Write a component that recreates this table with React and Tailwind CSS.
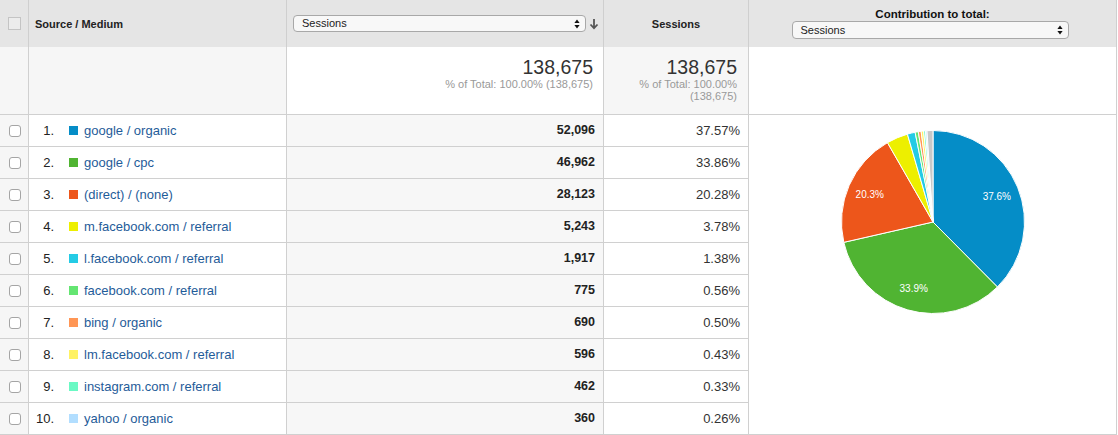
import React from 'react';

const rows = [
  { n: 1, label: 'google / organic', color: '#058dc7', sessions: '52,096', pct: '37.57%', v: 37.57 },
  { n: 2, label: 'google / cpc', color: '#50b432', sessions: '46,962', pct: '33.86%', v: 33.86 },
  { n: 3, label: '(direct) / (none)', color: '#ed561b', sessions: '28,123', pct: '20.28%', v: 20.28 },
  { n: 4, label: 'm.facebook.com / referral', color: '#edef00', sessions: '5,243', pct: '3.78%', v: 3.78 },
  { n: 5, label: 'l.facebook.com / referral', color: '#24cbe5', sessions: '1,917', pct: '1.38%', v: 1.38 },
  { n: 6, label: 'facebook.com / referral', color: '#64e572', sessions: '775', pct: '0.56%', v: 0.56 },
  { n: 7, label: 'bing / organic', color: '#ff9655', sessions: '690', pct: '0.50%', v: 0.5 },
  { n: 8, label: 'lm.facebook.com / referral', color: '#fff263', sessions: '596', pct: '0.43%', v: 0.43 },
  { n: 9, label: 'instagram.com / referral', color: '#6af9c4', sessions: '462', pct: '0.33%', v: 0.33 },
  { n: 10, label: 'yahoo / organic', color: '#b2deff', sessions: '360', pct: '0.26%', v: 0.26 },
];

function SelectArrows() {
  return (
    <svg width="6" height="10" viewBox="0 0 6 10" className="shrink-0">
      <path d="M3 0.5 L5.6 4 L0.4 4 Z" fill="#111" />
      <path d="M3 9.5 L5.6 6 L0.4 6 Z" fill="#111" />
    </svg>
  );
}

function Pie() {
  const cx = 93;
  const cy = 93;
  const r = 91.5;
  const slices = [...rows.map((x) => ({ v: x.v, color: x.color })), { v: 1.05, color: '#c8c8c8' }];
  let acc = 0;
  const pt = (a, rad) => [cx + rad * Math.sin(a), cy - rad * Math.cos(a)];
  const labels = [];
  const paths = slices.map((s, i) => {
    const a0 = (acc / 100) * Math.PI * 2;
    acc += s.v;
    const a1 = (acc / 100) * Math.PI * 2;
    const [x0, y0] = pt(a0, r);
    const [x1, y1] = pt(a1, r);
    const large = a1 - a0 > Math.PI ? 1 : 0;
    if (s.v > 10) {
      const [lx, ly] = pt((a0 + a1) / 2, 69);
      labels.push({ x: lx, y: ly, t: s.v.toFixed(1) + '%' });
    }
    return (
      <path
        key={i}
        d={`M${cx} ${cy} L${x0} ${y0} A${r} ${r} 0 ${large} 1 ${x1} ${y1} Z`}
        fill={s.color}
        stroke="#fff"
        strokeWidth="1"
        strokeLinejoin="round"
      />
    );
  });
  return (
    <svg width="186" height="186" viewBox="0 0 186 186">
      {paths}
      {labels.map((l) => (
        <text
          key={l.t}
          x={l.x}
          y={l.y + 4}
          textAnchor="middle"
          fill="#fff"
          fontSize="10"
          fontFamily="Liberation Sans, Arial, sans-serif"
        >
          {l.t}
        </text>
      ))}
    </svg>
  );
}

export default function App() {
  return (
    <div className="w-[1118px] h-[435px] bg-white font-['Liberation_Sans',Arial,sans-serif] text-[#333] overflow-hidden">
      <div className="grid grid-cols-[29px_258px_317px_145px_368px] grid-rows-[47px_68px_repeat(10,32px)]">
        {/* header */}
        <div className="bg-[#e5e5e5] border-r border-[#cfcfcf] pl-[8px] pt-[17px]">
          <div className="w-[13px] h-[13px] border border-[#c4c4c4] bg-[#ececec]" />
        </div>
        <div className="bg-[#e5e5e5] border-r border-[#cfcfcf] flex items-center pl-[6px] pt-[2px] text-[11px] font-bold text-[#222]">
          Source / Medium
        </div>
        <div className="bg-[#e5e5e5] border-r border-[#cfcfcf] flex items-start pt-[15px] pl-[6px]">
          <div className="w-[293px] h-[17px] rounded-[4px] border border-[#a8a8a8] bg-[#f8f8f8] flex items-center justify-between pl-[8px] pr-[5px] text-[11px] text-[#222]">
            <span>Sessions</span>
            <SelectArrows />
          </div>
          <svg width="10" height="12" viewBox="0 0 10 12" className="ml-[3px] mt-[3px]">
            <path d="M5 1 V10 M1.5 6.5 L5 10.2 L8.5 6.5" stroke="#555" strokeWidth="1.8" fill="none" />
          </svg>
        </div>
        <div className="bg-[#e5e5e5] border-r border-[#cfcfcf] flex items-center justify-center pt-[2px] text-[11px] font-bold text-[#222]">
          Sessions
        </div>
        <div className="bg-[#e5e5e5] border-r border-[#cfcfcf] flex flex-col items-center pt-[8px]">
          <div className="text-[11.5px] leading-[13px] font-bold text-[#111]">Contribution to total:</div>
          <div className="mt-[0px] ml-[-5px] w-[277px] h-[18px] rounded-[4px] border border-[#a8a8a8] bg-[#f7f7f7] flex items-center justify-between pl-[8px] pr-[5px] text-[11px] text-[#222]">
            <span>Sessions</span>
            <SelectArrows />
          </div>
        </div>

        {/* totals */}
        <div className="bg-[#f6f6f6] border-r border-b border-[#d0d0d0]" />
        <div className="bg-[#f6f6f6] border-r border-b border-[#d0d0d0]" />
        <div className="bg-white border-r border-b border-[#d0d0d0] flex flex-col items-end pt-[9px] pr-[10px]">
          <div className="text-[19.5px] leading-[22px] text-[#333]">138,675</div>
          <div className="text-[11px] leading-[13px] text-[#999]">% of Total: 100.00% (138,675)</div>
        </div>
        <div className="bg-[#f6f6f6] border-r border-b border-[#d0d0d0] flex flex-col items-end text-right pt-[9px] pr-[11px]">
          <div className="text-[19.5px] leading-[22px] text-[#333]">138,675</div>
          <div className="text-[11px] leading-[12px] text-[#999]">
            % of Total: 100.00%
            <br />
            (138,675)
          </div>
        </div>
        <div className="bg-white border-r border-b border-[#d0d0d0]" />

        {/* rows */}
        {rows.map((r) => (
          <React.Fragment key={r.n}>
            <div className="bg-[#f6f6f6] border-r border-b border-[#d0d0d0] flex items-center pl-[9px]">
              <div className="w-[12px] h-[12px] rounded-[3px] border border-[#a5a5a5] bg-white" />
            </div>
            <div className="bg-white border-r border-b border-[#d0d0d0] flex items-center text-[13px]">
              <span className="w-[25px] text-right text-[#222]">{r.n}.</span>
              <span className="ml-[15px] w-[9px] h-[9px] shrink-0" style={{ backgroundColor: r.color }} />
              <span className="ml-[6px] text-[#1f5c99]">{r.label}</span>
            </div>
            <div className="bg-[#f7f7f7] border-r border-b border-[#d0d0d0] flex items-center justify-end pr-[8px] text-[12.5px] font-bold text-[#222]">
              {r.sessions}
            </div>
            <div className="bg-white border-r border-b border-[#d0d0d0] flex items-center justify-end pr-[8px] text-[13px] text-[#333]">
              {r.pct}
            </div>
          </React.Fragment>
        ))}
        <div className="col-start-5 row-start-3 row-span-10 bg-white border-r border-b border-[#d0d0d0] flex justify-center pt-[14px]">
          <Pie />
        </div>
      </div>
    </div>
  );
}
